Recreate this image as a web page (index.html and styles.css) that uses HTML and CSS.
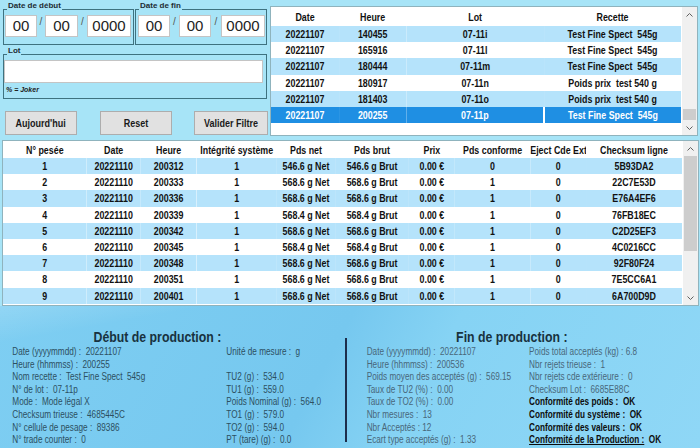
FILE: index.html
```html
<!DOCTYPE html>
<html lang="fr">
<head>
<meta charset="utf-8">
<title>Production</title>
<link rel="stylesheet" href="styles.css">
</head>
<body>
<div class="top">
  <div class="filters">
    <div class="dates">
      <div class="group g-debut">
        <span class="glabel">Date de début</span>
        <div class="date-row">
          <span class="inp w32">00</span><span class="sl">/</span><span class="inp w33">00</span><span class="sl s9">/</span><span class="inp w44">0000</span>
        </div>
      </div>
      <div class="group g-fin">
        <span class="glabel">Date de fin</span>
        <div class="date-row">
          <span class="inp w32">00</span><span class="sl s9">/</span><span class="inp w32">00</span><span class="sl s10">/</span><span class="inp w44">0000</span>
        </div>
      </div>
    </div>
    <div class="group g-lot">
      <span class="glabel">Lot</span>
      <div class="lot-inp"></div>
      <div class="joker">% = Joker</div>
    </div>
    <div class="buttons">
      <button class="btn b72"><span class="bt">Aujourd'hui</span></button>
      <button class="btn b72"><span class="bt">Reset</span></button>
      <button class="btn b74"><span class="bt">Valider Filtre</span></button>
    </div>
  </div>

  <div class="grid grid-top">
    <div class="grid-body">
      <table class="tbl">
        <colgroup><col style="width:83px"><col style="width:82px"><col style="width:168px"><col style="width:167px"></colgroup>
        <thead><tr class="hdr hdr-top"><th>Date</th><th>Heure</th><th>Lot</th><th>Recette</th></tr></thead>
        <tbody>
          <tr class="alt"><td>20221107</td><td>140455</td><td>07-11i</td><td>Test Fine Spect  545g</td></tr>
          <tr><td>20221107</td><td>165916</td><td>07-11l</td><td>Test Fine Spect  545g</td></tr>
          <tr class="alt"><td>20221107</td><td>180444</td><td>07-11m</td><td>Test Fine Spect  545g</td></tr>
          <tr><td>20221107</td><td>180917</td><td>07-11n</td><td>Poids prix  test 540 g</td></tr>
          <tr class="alt"><td>20221107</td><td>181403</td><td>07-11o</td><td>Poids prix  test 540 g</td></tr>
          <tr class="sel"><td>20221107</td><td>200255</td><td>07-11p</td><td class="cur">Test Fine Spect  545g</td></tr>
        </tbody>
      </table>
    </div>
    <div class="vscroll">
      <div class="arrow"><svg width="7" height="4" viewBox="0 0 7 4"><polyline points="0.5,3.5 3.5,0.5 6.5,3.5" fill="none" stroke="#606060" stroke-width="1"/></svg></div>
      <div class="track end"><div class="thumb th-top"></div></div>
      <div class="arrow"><svg width="7" height="4" viewBox="0 0 7 4"><polyline points="0.5,0.5 3.5,3.5 6.5,0.5" fill="none" stroke="#606060" stroke-width="1"/></svg></div>
    </div>
  </div>
</div>

<div class="grid grid-mid">
  <div class="grid-body">
    <table class="tbl">
      <colgroup><col style="width:102px"><col style="width:66px"><col style="width:68px"><col style="width:98px"><col style="width:71px"><col style="width:90px"><col style="width:56px"><col style="width:92px"><col style="width:68px"><col style="width:117px"></colgroup>
      <thead><tr class="hdr hdr-mid"><th>N° pesée</th><th>Date</th><th>Heure</th><th>Intégrité système</th><th>Pds net</th><th>Pds brut</th><th>Prix</th><th>Pds conforme</th><th>Eject Cde Ext</th><th>Checksum ligne</th></tr></thead>
      <tbody>
        <tr class="alt"><td>1</td><td>20221110</td><td>200312</td><td>1</td><td>546.6 g Net</td><td>546.6 g Brut</td><td>0.00 €</td><td>0</td><td>0</td><td>5B93DA2</td></tr>
        <tr><td>2</td><td>20221110</td><td>200333</td><td>1</td><td>568.6 g Net</td><td>568.6 g Brut</td><td>0.00 €</td><td>1</td><td>0</td><td>22C7E53D</td></tr>
        <tr class="alt"><td>3</td><td>20221110</td><td>200336</td><td>1</td><td>568.6 g Net</td><td>568.6 g Brut</td><td>0.00 €</td><td>1</td><td>0</td><td>E76A4EF6</td></tr>
        <tr><td>4</td><td>20221110</td><td>200339</td><td>1</td><td>568.4 g Net</td><td>568.4 g Brut</td><td>0.00 €</td><td>1</td><td>0</td><td>76FB18EC</td></tr>
        <tr class="alt"><td>5</td><td>20221110</td><td>200342</td><td>1</td><td>568.6 g Net</td><td>568.6 g Brut</td><td>0.00 €</td><td>1</td><td>0</td><td>C2D25EF3</td></tr>
        <tr><td>6</td><td>20221110</td><td>200345</td><td>1</td><td>568.4 g Net</td><td>568.4 g Brut</td><td>0.00 €</td><td>1</td><td>0</td><td>4C0216CC</td></tr>
        <tr class="alt"><td>7</td><td>20221110</td><td>200348</td><td>1</td><td>568.6 g Net</td><td>568.6 g Brut</td><td>0.00 €</td><td>1</td><td>0</td><td>92F80F24</td></tr>
        <tr><td>8</td><td>20221110</td><td>200351</td><td>1</td><td>568.6 g Net</td><td>568.6 g Brut</td><td>0.00 €</td><td>1</td><td>0</td><td>7E5CC6A1</td></tr>
        <tr class="alt"><td>9</td><td>20221110</td><td>200401</td><td>1</td><td>568.6 g Net</td><td>568.6 g Brut</td><td>0.00 €</td><td>1</td><td>0</td><td>6A700D9D</td></tr>
      </tbody>
    </table>
  </div>
  <div class="vscroll">
    <div class="arrow"><svg width="7" height="4" viewBox="0 0 7 4"><polyline points="0.5,3.5 3.5,0.5 6.5,3.5" fill="none" stroke="#606060" stroke-width="1"/></svg></div>
    <div class="track"><div class="thumb th-mid"></div></div>
    <div class="arrow"><svg width="7" height="4" viewBox="0 0 7 4"><polyline points="0.5,0.5 3.5,3.5 6.5,0.5" fill="none" stroke="#606060" stroke-width="1"/></svg></div>
  </div>
</div>

<div class="bottom">
  <section class="prod debut">
    <div class="pin">
      <h2 class="ptitle">Début de production :</h2>
      <div class="cols">
        <div class="col c1">
          <div class="ln">Date (yyyymmdd) :  20221107</div>
          <div class="ln">Heure (hhmmss) :  200255</div>
          <div class="ln">Nom recette :  Test Fine Spect  545g</div>
          <div class="ln">N° de lot :  07-11p</div>
          <div class="ln">Mode :  Mode légal X</div>
          <div class="ln">Checksum trieuse :  4685445C</div>
          <div class="ln">N° cellule de pesage :  89386</div>
          <div class="ln">N° trade counter :  0</div>
        </div>
        <div class="col">
          <div class="ln">Unité de mesure :  g</div>
          <div class="ln"> </div>
          <div class="ln">TU2 (g) :  534.0</div>
          <div class="ln">TU1 (g) :  559.0</div>
          <div class="ln">Poids Nominal (g) :  564.0</div>
          <div class="ln">TO1 (g) :  579.0</div>
          <div class="ln">TO2 (g) :  594.0</div>
          <div class="ln">PT (tare) (g) :  0.0</div>
        </div>
      </div>
    </div>
  </section>
  <div class="divider"></div>
  <section class="prod fin">
    <div class="pin">
      <h2 class="ptitle">Fin de production :</h2>
      <div class="cols">
        <div class="col c1">
          <div class="ln">Date (yyyymmdd) :  20221107</div>
          <div class="ln">Heure (hhmmss) :  200536</div>
          <div class="ln">Poids moyen des acceptés (g) :  569.15</div>
          <div class="ln">Taux de TU2 (%) :  0.00</div>
          <div class="ln">Taux de TO2 (%) :  0.00</div>
          <div class="ln">Nbr mesures :  13</div>
          <div class="ln">Nbr Acceptés : 12</div>
          <div class="ln">Ecart type acceptés (g) :  1.33</div>
        </div>
        <div class="col">
          <div class="ln">Poids total acceptés (kg) : 6.8</div>
          <div class="ln">Nbr rejets trieuse :  1</div>
          <div class="ln">Nbr rejets cde extérieure :  0</div>
          <div class="ln">Checksum Lot :  6685E88C</div>
          <div class="ln ok">Conformité des poids :  OK</div>
          <div class="ln ok">Conformité du système :  OK</div>
          <div class="ln ok">Conformité des valeurs :  OK</div>
          <div class="ln ok"><span class="ul">Conformité de la Production :</span>  OK</div>
        </div>
      </div>
    </div>
  </section>
</div>
</body>
</html>
```

FILE: styles.css
```css
* { box-sizing: border-box; }
html, body { margin: 0; padding: 0; }
body {
  width: 700px;
  height: 448px;
  overflow: hidden;
  background: #a7e4f7;
  font-family: "Liberation Sans", Arial, sans-serif;
  color: #111;
}

/* ---------- top ---------- */
.top { display: flex; height: 140px; }
.filters { width: 270px; padding: 9px 0 0 3px; }
.dates { display: flex; gap: 1px; }
.group { position: relative; border: 1px solid #3e7280; }
.glabel {
  position: absolute;
  top: -9px;
  left: 3px;
  padding: 0 1px;
  background: #a7e4f7;
  font-weight: bold;
  font-size: 8px;
  line-height: 10px;
  color: #1d2c33;
}
.g-debut { width: 131px; height: 36px; padding: 5px 0 0 1px; }
.g-fin { width: 132px; height: 36px; padding: 5px 0 0 2px; }
.date-row { display: flex; align-items: flex-start; }
.inp {
  display: block;
  height: 22px;
  background: #fff;
  border: 1px solid #c4c4c4;
  font-size: 15px;
  line-height: 20px;
  text-align: center;
  color: #222;
}
.w32 { width: 32px; }
.w33 { width: 33px; }
.w44 { width: 44px; }
.sl {
  width: 8px;
  padding-top: 1px;
  text-align: center;
  font-size: 10px;
  line-height: 11px;
  color: #555;
}
.s9 { width: 9px; }
.s10 { width: 10px; }

.g-lot { width: 264px; height: 45px; margin-top: 9px; padding: 5px 0 0 0; }
.lot-inp { width: 259px; height: 23px; background: #fff; border: 1px solid #c4c4c4; }
.joker {
  margin-top: 2px;
  padding-left: 2px;
  font-size: 7px;
  line-height: 9px;
  font-weight: bold;
  font-style: italic;
  color: #222;
}
.buttons {
  display: flex;
  justify-content: space-between;
  width: 263px;
  margin: 12px 0 0 2px;
}
.btn {
  height: 24px;
  margin: 0;
  padding: 0;
  background: #e1e1e1;
  border: 1px solid #adadad;
  font-family: "Liberation Sans", Arial, sans-serif;
  font-weight: bold;
  font-size: 11px;
  color: #1a1a1a;
  display: flex;
  align-items: center;
  justify-content: center;
  overflow: visible;
}
.bt { display: inline-block; white-space: nowrap; transform: scaleX(0.82); }
.b72 { width: 72px; }
.b74 { width: 74px; }

/* ---------- grids ---------- */
.grid {
  display: flex;
  background: #fff;
  border: 1px solid #8fb3bd;
}
.grid-top { width: 428px; height: 130px; margin-top: 6px; }
.grid-mid { width: 697px; height: 166px; margin-left: 2px; }
.grid-body { flex: 1; min-width: 0; overflow: hidden; }
.tbl {
  border-collapse: collapse;
  table-layout: fixed;
  font-weight: bold;
  font-size: 10.8px;
  color: #111;
  transform: scaleX(0.82);
  transform-origin: 0 0;
}
.grid-top .tbl { width: 500px; }
.grid-mid .tbl { width: 828px; }
.tbl th, .tbl td {
  padding: 0;
  text-align: center;
  white-space: pre;
  overflow: hidden;
}
.hdr-top th { height: 19px; }
.hdr-mid th { height: 17px; }
.tbl td { height: 16.2px; }
.tbl tr.alt td { background: #b5e3fb; }
.tbl tr.sel td { background: #1f8fe3; color: #fff; }
.tbl tr.sel td.cur { border-left: 2px solid #fff; }

.vscroll {
  width: 15px;
  margin-left: 1px;
  display: flex;
  flex-direction: column;
  background: #f0f0f0;
}
.arrow {
  height: 15px;
  display: flex;
  align-items: center;
  justify-content: center;
}
.track { flex: 1; display: flex; flex-direction: column; }
.track.end { justify-content: flex-end; }
.thumb { background: #cdcdcd; margin: 0 1px; }
.th-top { height: 11px; }
.th-mid { height: 95px; }

/* ---------- bottom ---------- */
.bottom {
  display: flex;
  height: 142px;
  padding-top: 22px;
  background:
    linear-gradient(170deg, rgba(255,255,255,0.16) 0%, rgba(255,255,255,0) 14%),
    linear-gradient(118deg, #7ecef2 0%, #76c8ef 46%, #86d3f4 60%, #8fd7f6 100%);
}
.prod { flex: none; }
.pin { transform: scaleX(0.82); transform-origin: 0 0; }
.debut { width: 345px; color: #2c4f61; }
.debut .pin { width: 421px; padding-left: 15px; }
.fin { width: 353px; color: #48677a; }
.fin .pin { width: 430px; padding-left: 24px; }
.ptitle {
  width: 354px;
  margin: 0;
  text-align: center;
  font-size: 15px;
  line-height: 18px;
  font-weight: bold;
  color: #18323f;
}
.cols { display: flex; }
.debut .c1 { width: 261px; }
.fin .c1 { width: 198px; }
.ln {
  font-size: 10px;
  line-height: 12.6px;
  height: 12.6px;
  white-space: pre;
}
.ok { font-weight: bold; color: #0d0d0d; }
.ul { text-decoration: underline; }
.divider {
  flex: none;
  width: 2px;
  height: 104px;
  margin-top: 10px;
  background: #1d2e4c;
}
```
